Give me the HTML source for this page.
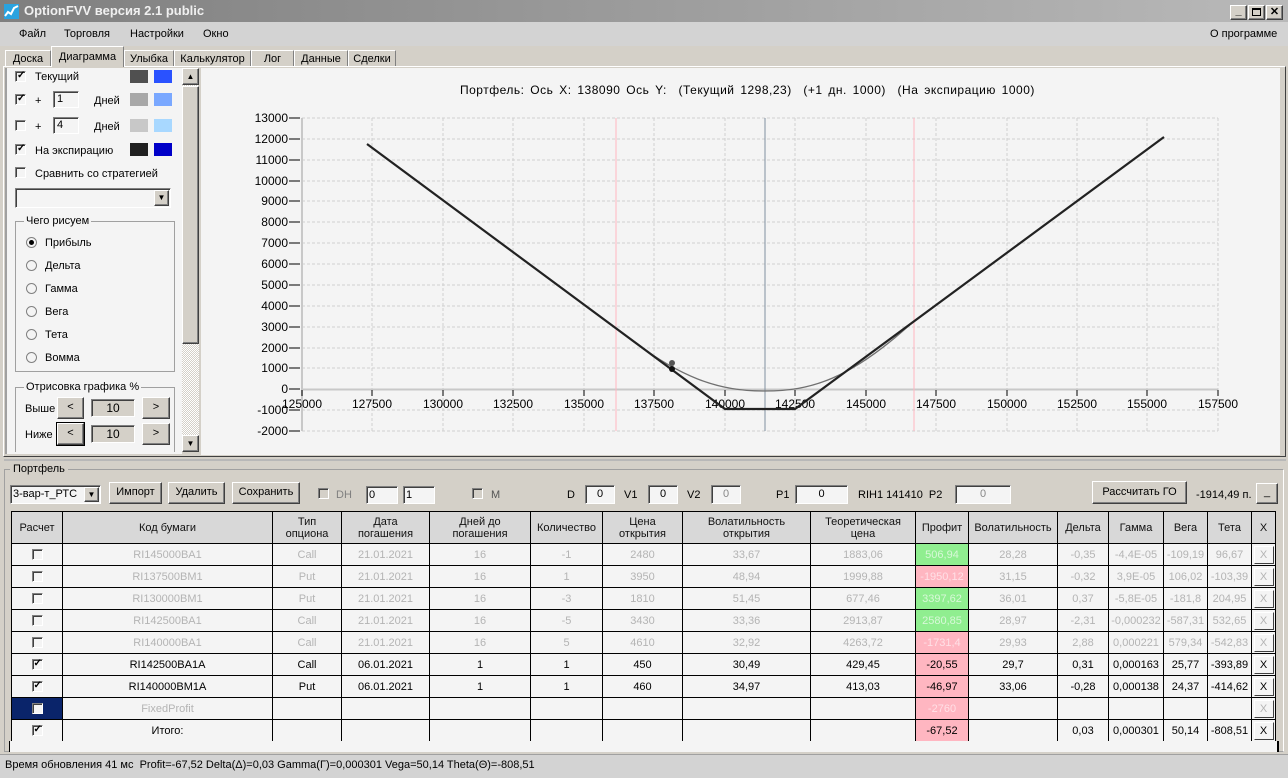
<!DOCTYPE html>
<html><head><meta charset="utf-8"><style>
*{box-sizing:border-box;margin:0;padding:0}
body{width:1288px;height:778px;background:#d4d0c8;font-family:"Liberation Sans",sans-serif;font-size:11px;color:#000;position:relative;overflow:hidden}
.a{position:absolute}
.title{left:0;top:0;width:1288px;height:22px;background:linear-gradient(90deg,#7f7f7f,#b9b9b9);color:#f0f0f0;font-weight:bold;font-size:13px;line-height:22px;padding-left:24px}
.menu{left:0;top:22px;width:1288px;height:24px;background:#d3d3d3;font-size:11px}
.menu span{position:absolute;top:6px}
.tab{position:absolute;top:50px;height:17px;border:1px solid #fff;border-right-color:#808080;border-bottom:none;background:#d4d0c8;font-size:11px;text-align:center;line-height:16px}
.cb{position:absolute;width:11px;height:11px;border:1px solid #808080;border-right-color:#fff;border-bottom-color:#fff;background:#f4f4f4;box-shadow:inset 1px 1px 0 #404040}
.cb.c::after{content:"✓";position:absolute;left:1px;top:-2px;font-size:10px;font-weight:bold;line-height:12px}
.btn{position:absolute;background:#d4d0c8;border:1px solid;border-color:#fff #404040 #404040 #fff;box-shadow:inset -1px -1px 0 #808080;text-align:center;font-size:11px}
.inp{position:absolute;border:1px solid;border-color:#808080 #fff #fff #808080;box-shadow:inset 1px 1px 0 #404040;background:#f4f4f4;font-size:11px;text-align:center}
.sw{position:absolute;width:18px;height:13px}
.rad{position:absolute;width:11px;height:11px;border-radius:50%;border:1px solid #808080;background:#f4f4f4}
table{border-collapse:collapse;table-layout:fixed;position:absolute;left:11px;top:511px;width:1264px;font-size:11px;background:#f4f4f4}
td{border:1px solid #000;height:22px;text-align:center;white-space:nowrap;overflow:hidden;padding:0;vertical-align:middle}
td .cb{position:relative;display:inline-block;vertical-align:middle}
tr.h td{height:32px;background:#d8d8d8;line-height:12px;color:#111}
tr.g td{color:#b4b4b4}
td.gr{background:#90ee90}td.pk{background:#ffb6c1}
.x{display:inline-block;width:20px;height:18px;border:1px solid;border-color:#fff #404040 #404040 #fff;line-height:16px;background:#f4f4f4;vertical-align:middle}
</style></head><body>
<div class="a title">OptionFVV версия 2.1 public</div>
<svg class="a" style="left:4px;top:4px" width="15" height="15"><rect width="15" height="15" fill="#2aa3e0"/><polyline points="1,12 4,8 7,10 10,4 14,2" fill="none" stroke="#fff" stroke-width="2"/></svg>
<div class="a" style="left:1230px;top:5px;width:54px;height:15px">
<div class="btn" style="left:0;top:0;width:17px;height:15px;line-height:10px;font-weight:bold">_</div>
<div class="btn" style="left:18px;top:0;width:17px;height:15px;"><div style="margin:2px 3px;width:9px;height:8px;border:1px solid #000;border-top-width:2px"></div></div>
<div class="btn" style="left:36px;top:0;width:17px;height:15px;line-height:13px;font-weight:bold">✕</div></div>
<div class="a menu"><span style="left:19px">Файл</span><span style="left:64px">Торговля</span><span style="left:130px">Настройки</span><span style="left:203px">Окно</span><span style="left:1210px">О программе</span></div>
<div class="tab" style="left:5px;width:46px">Доска</div>
<div class="tab" style="left:51px;width:73px;top:46px;height:21px;z-index:2;background:#d4d0c8;line-height:20px">Диаграмма</div>
<div class="tab" style="left:124px;width:50px">Улыбка</div>
<div class="tab" style="left:174px;width:77px">Калькулятор</div>
<div class="tab" style="left:251px;width:43px">Лог</div>
<div class="tab" style="left:294px;width:54px">Данные</div>
<div class="tab" style="left:348px;width:48px">Сделки</div>
<div class="a" style="left:3px;top:66px;width:1283px;height:391px;border:1px solid #fff;border-right-color:#404040;border-bottom-color:#404040;background:#d4d0c8"></div>
<div class="a" style="left:5px;top:68px;width:177px;height:386px;background:#f4f4f4;border-left:2px solid #a0a0a0"></div>
<div class="cb c" style="left:15px;top:71px"></div><div class="a" style="left:35px;top:71px">Текущий</div><div class="sw" style="left:130px;top:70px;background:#505050"></div><div class="sw" style="left:154px;top:70px;background:#2a52ff"></div>
<div class="cb c" style="left:15px;top:94px"></div><div class="a" style="left:35px;top:95px">+</div><div class="inp" style="left:53px;top:91px;width:26px;height:17px;text-align:left;padding-left:3px;line-height:15px">1</div><div class="a" style="left:94px;top:95px">Дней</div><div class="sw" style="left:130px;top:93px;background:#a8a8a8"></div><div class="sw" style="left:154px;top:93px;background:#7aa8ff"></div>
<div class="cb" style="left:15px;top:120px"></div><div class="a" style="left:35px;top:121px">+</div><div class="inp" style="left:53px;top:117px;width:26px;height:17px;text-align:left;padding-left:3px;line-height:15px">4</div><div class="a" style="left:94px;top:121px">Дней</div><div class="sw" style="left:130px;top:119px;background:#c8c8c8"></div><div class="sw" style="left:154px;top:119px;background:#a8d8ff"></div>
<div class="cb c" style="left:15px;top:144px"></div><div class="a" style="left:35px;top:145px">На экспирацию</div><div class="sw" style="left:130px;top:143px;background:#202020"></div><div class="sw" style="left:154px;top:143px;background:#0000c8"></div>
<div class="cb" style="left:15px;top:167px"></div><div class="a" style="left:35px;top:168px">Сравнить со стратегией</div>
<div class="inp" style="left:15px;top:188px;width:156px;height:20px"><div class="btn" style="right:1px;top:1px;width:15px;height:16px;font-size:8px;line-height:14px">▼</div></div>
<div class="a" style="left:15px;top:221px;width:160px;height:151px;border:1px solid #a0a0a0"></div><div class="a" style="left:24px;top:215px;background:#f4f4f4;padding:0 2px">Чего рисуем</div>
<div class="rad" style="left:26px;top:237px"><div style="width:5px;height:5px;background:#000;border-radius:50%;margin:2px"></div></div><div class="a" style="left:45px;top:237px">Прибыль</div>
<div class="rad" style="left:26px;top:260px"></div><div class="a" style="left:45px;top:260px">Дельта</div>
<div class="rad" style="left:26px;top:283px"></div><div class="a" style="left:45px;top:283px">Гамма</div>
<div class="rad" style="left:26px;top:306px"></div><div class="a" style="left:45px;top:306px">Вега</div>
<div class="rad" style="left:26px;top:329px"></div><div class="a" style="left:45px;top:329px">Тета</div>
<div class="rad" style="left:26px;top:352px"></div><div class="a" style="left:45px;top:352px">Вомма</div>
<div class="a" style="left:15px;top:387px;width:160px;height:65px;border:1px solid #a0a0a0;border-bottom:none"></div><div class="a" style="left:24px;top:381px;background:#f4f4f4;padding:0 2px">Отрисовка графика %</div>
<div class="a" style="left:25px;top:403px">Выше</div><div class="btn" style="left:57px;top:397px;width:27px;height:22px;line-height:19px">&lt;</div><div class="inp" style="left:91px;top:399px;width:44px;height:18px;background:#d4d0c8;font-size:12px;line-height:16px">10</div><div class="btn" style="left:142px;top:397px;width:28px;height:22px;line-height:19px">&gt;</div>
<div class="a" style="left:25px;top:429px">Ниже</div><div class="btn" style="left:57px;top:423px;width:27px;height:22px;line-height:19px;outline:1px solid #000">&lt;</div><div class="inp" style="left:91px;top:425px;width:44px;height:18px;background:#d4d0c8;font-size:12px;line-height:16px">10</div><div class="btn" style="left:142px;top:423px;width:28px;height:22px;line-height:19px">&gt;</div>
<div class="a" style="left:182px;top:68px;width:17px;height:384px;background:repeating-conic-gradient(#d4d0c8 0 25%,#fff 0 50%) 0 0/2px 2px"></div>
<div class="btn" style="left:182px;top:68px;width:17px;height:17px;font-size:8px;line-height:15px">▲</div>
<div class="btn" style="left:182px;top:86px;width:17px;height:258px"></div>
<div class="btn" style="left:182px;top:435px;width:17px;height:17px;font-size:8px;line-height:15px">▼</div>
<div class="a" style="left:201px;top:68px;width:1079px;height:387px;background:#f4f4f4"></div>
<div class="a" style="left:460px;top:83px;font-size:12px;letter-spacing:0.5px;word-spacing:2px">Портфель: Ось X: 138090 Ось Y:&nbsp; (Текущий 1298,23)&nbsp; (+1 дн. 1000)&nbsp; (На экспирацию 1000)</div>
<svg class="a" style="left:0;top:0" width="1288" height="460" font-family="Liberation Sans" font-size="12">
<g stroke="#d0d0d0" stroke-dasharray="3,2" stroke-width="1">
<line x1="302" y1="118" x2="1218" y2="118"/><line x1="302" y1="139" x2="1218" y2="139"/><line x1="302" y1="160" x2="1218" y2="160"/><line x1="302" y1="181" x2="1218" y2="181"/><line x1="302" y1="201" x2="1218" y2="201"/><line x1="302" y1="222" x2="1218" y2="222"/><line x1="302" y1="243" x2="1218" y2="243"/><line x1="302" y1="264" x2="1218" y2="264"/><line x1="302" y1="285" x2="1218" y2="285"/><line x1="302" y1="306" x2="1218" y2="306"/><line x1="302" y1="327" x2="1218" y2="327"/><line x1="302" y1="348" x2="1218" y2="348"/><line x1="302" y1="368" x2="1218" y2="368"/><line x1="302" y1="410" x2="1218" y2="410"/><line x1="302" y1="431" x2="1218" y2="431"/>
<line x1="372" y1="118" x2="372" y2="431"/><line x1="443" y1="118" x2="443" y2="431"/><line x1="513" y1="118" x2="513" y2="431"/><line x1="584" y1="118" x2="584" y2="431"/><line x1="654" y1="118" x2="654" y2="431"/><line x1="725" y1="118" x2="725" y2="431"/><line x1="795" y1="118" x2="795" y2="431"/><line x1="866" y1="118" x2="866" y2="431"/><line x1="936" y1="118" x2="936" y2="431"/><line x1="1007" y1="118" x2="1007" y2="431"/><line x1="1077" y1="118" x2="1077" y2="431"/><line x1="1147" y1="118" x2="1147" y2="431"/><line x1="1218" y1="118" x2="1218" y2="431"/>
</g>
<line x1="302" y1="118" x2="302" y2="431" stroke="#c8c8c8" stroke-width="2"/>
<line x1="302" y1="389.5" x2="1218" y2="389.5" stroke="#c8c8c8" stroke-width="2"/>
<g stroke="#000"><line x1="289" y1="118" x2="300" y2="118"/><line x1="289" y1="139" x2="300" y2="139"/><line x1="289" y1="160" x2="300" y2="160"/><line x1="289" y1="181" x2="300" y2="181"/><line x1="289" y1="201" x2="300" y2="201"/><line x1="289" y1="222" x2="300" y2="222"/><line x1="289" y1="243" x2="300" y2="243"/><line x1="289" y1="264" x2="300" y2="264"/><line x1="289" y1="285" x2="300" y2="285"/><line x1="289" y1="306" x2="300" y2="306"/><line x1="289" y1="327" x2="300" y2="327"/><line x1="289" y1="348" x2="300" y2="348"/><line x1="289" y1="368" x2="300" y2="368"/><line x1="289" y1="389" x2="300" y2="389"/><line x1="289" y1="410" x2="300" y2="410"/><line x1="289" y1="431" x2="300" y2="431"/>
<line x1="302" y1="390" x2="302" y2="396"/><line x1="372" y1="390" x2="372" y2="396"/><line x1="443" y1="390" x2="443" y2="396"/><line x1="513" y1="390" x2="513" y2="396"/><line x1="584" y1="390" x2="584" y2="396"/><line x1="654" y1="390" x2="654" y2="396"/><line x1="725" y1="390" x2="725" y2="396"/><line x1="795" y1="390" x2="795" y2="396"/><line x1="866" y1="390" x2="866" y2="396"/><line x1="936" y1="390" x2="936" y2="396"/><line x1="1007" y1="390" x2="1007" y2="396"/><line x1="1077" y1="390" x2="1077" y2="396"/><line x1="1147" y1="390" x2="1147" y2="396"/><line x1="1218" y1="390" x2="1218" y2="396"/></g>
<g text-anchor="end"><text x="288" y="122">13000</text><text x="288" y="143">12000</text><text x="288" y="164">11000</text><text x="288" y="185">10000</text><text x="288" y="205">9000</text><text x="288" y="226">8000</text><text x="288" y="247">7000</text><text x="288" y="268">6000</text><text x="288" y="289">5000</text><text x="288" y="310">4000</text><text x="288" y="331">3000</text><text x="288" y="352">2000</text><text x="288" y="372">1000</text><text x="288" y="393">0</text><text x="288" y="414">-1000</text><text x="288" y="435">-2000</text></g>
<g text-anchor="middle"><text x="302" y="408">125000</text><text x="372" y="408">127500</text><text x="443" y="408">130000</text><text x="513" y="408">132500</text><text x="584" y="408">135000</text><text x="654" y="408">137500</text><text x="725" y="408">140000</text><text x="795" y="408">142500</text><text x="866" y="408">145000</text><text x="936" y="408">147500</text><text x="1007" y="408">150000</text><text x="1077" y="408">152500</text><text x="1147" y="408">155000</text><text x="1218" y="408">157500</text></g>
<line x1="616" y1="118" x2="616" y2="431" stroke="#ffb6c1"/><line x1="914" y1="118" x2="914" y2="431" stroke="#ffb6c1"/>
<line x1="765" y1="118" x2="765" y2="431" stroke="#8090a0"/>
<path d="M616,328 C680,380 720,391 765,391 C810,391 850,380 914,321" fill="none" stroke="#707070" stroke-width="1.3"/>
<polyline points="367,144 725,409 795,409 1164,137" fill="none" stroke="#222" stroke-width="2.2"/>
<circle cx="672" cy="363" r="3" fill="#555"/><circle cx="672" cy="369" r="3" fill="#111"/>
</svg>
<div class="a" style="left:4px;top:469px;width:1280px;height:283px;border:1px solid #a0a0a0;border-right-color:#fff"></div>
<div class="a" style="left:4px;top:459px;width:1282px;height:2px;background:#b8b8b8"></div>
<div class="a" style="left:10px;top:463px;background:#d4d0c8;padding:0 3px">Портфель</div>
<div class="inp" style="left:10px;top:485px;width:91px;height:19px;text-align:left;padding:2px;background:#f4f4f4">3-вар-т_РТС<div class="btn" style="right:1px;top:1px;width:15px;height:15px;font-size:8px;line-height:13px">▼</div></div>
<div class="btn" style="left:109px;top:482px;width:53px;height:22px;line-height:19px">Импорт</div>
<div class="btn" style="left:168px;top:482px;width:57px;height:22px;line-height:19px">Удалить</div>
<div class="btn" style="left:232px;top:482px;width:68px;height:22px;line-height:19px">Сохранить</div>
<div class="cb" style="left:318px;top:488px;background:#d4d0c8"></div><div class="a" style="left:336px;top:489px;color:#808080">DH</div>
<div class="inp" style="left:366px;top:486px;width:32px;height:18px;text-align:left;padding-left:2px;background:#f4f4f4;line-height:16px">0</div>
<div class="inp" style="left:403px;top:486px;width:32px;height:18px;text-align:left;padding-left:2px;background:#f4f4f4;line-height:16px">1</div>
<div class="cb" style="left:472px;top:488px;background:#d4d0c8"></div><div class="a" style="left:491px;top:489px;color:#555">M</div>
<div class="a" style="left:567px;top:489px">D</div><div class="inp" style="left:585px;top:485px;width:30px;height:19px;line-height:17px">0</div>
<div class="a" style="left:624px;top:489px">V1</div><div class="inp" style="left:648px;top:485px;width:30px;height:19px;line-height:17px">0</div>
<div class="a" style="left:687px;top:489px">V2</div><div class="inp" style="left:711px;top:485px;width:30px;height:19px;line-height:17px;color:#888">0</div>
<div class="a" style="left:776px;top:489px">P1</div><div class="inp" style="left:795px;top:485px;width:53px;height:19px;line-height:17px">0</div>
<div class="a" style="left:858px;top:489px">RIH1 141410&nbsp; P2</div><div class="inp" style="left:955px;top:485px;width:56px;height:19px;line-height:17px;color:#888">0</div>
<div class="btn" style="left:1092px;top:481px;width:95px;height:23px;line-height:20px">Рассчитать ГО</div>
<div class="a" style="left:1196px;top:489px">-1914,49 п.</div>
<div class="btn" style="left:1256px;top:483px;width:22px;height:21px;line-height:16px">_</div>
<table>
<colgroup><col style="width:51px"><col style="width:210px"><col style="width:69px"><col style="width:88px"><col style="width:101px"><col style="width:72px"><col style="width:80px"><col style="width:128px"><col style="width:105px"><col style="width:53px"><col style="width:89px"><col style="width:51px"><col style="width:55px"><col style="width:44px"><col style="width:44px"><col style="width:24px"></colgroup>
<tr class="h"><td>Расчет</td><td>Код бумаги</td><td>Тип<br>опциона</td><td>Дата<br>погашения</td><td>Дней до<br>погашения</td><td>Количество</td><td>Цена<br>открытия</td><td>Волатильность<br>открытия</td><td>Теоретическая<br>цена</td><td>Профит</td><td>Волатильность</td><td>Дельта</td><td>Гамма</td><td>Вега</td><td>Тета</td><td>X</td></tr>
<tr class="g"><td><span class="cb"></span></td><td>RI145000BA1</td><td>Call</td><td>21.01.2021</td><td>16</td><td>-1</td><td>2480</td><td>33,67</td><td>1883,06</td><td class="gr" style="color:#d8f8d8">506,94</td><td>28,28</td><td>-0,35</td><td>-4,4E-05</td><td>-109,19</td><td>96,67</td><td><span class="x">X</span></td></tr>
<tr class="g"><td><span class="cb"></span></td><td>RI137500BM1</td><td>Put</td><td>21.01.2021</td><td>16</td><td>1</td><td>3950</td><td>48,94</td><td>1999,88</td><td class="pk" style="color:#ffe0e6">-1950,12</td><td>31,15</td><td>-0,32</td><td>3,9E-05</td><td>106,02</td><td>-103,39</td><td><span class="x">X</span></td></tr>
<tr class="g"><td><span class="cb"></span></td><td>RI130000BM1</td><td>Put</td><td>21.01.2021</td><td>16</td><td>-3</td><td>1810</td><td>51,45</td><td>677,46</td><td class="gr" style="color:#d8f8d8">3397,62</td><td>36,01</td><td>0,37</td><td>-5,8E-05</td><td>-181,8</td><td>204,95</td><td><span class="x">X</span></td></tr>
<tr class="g"><td><span class="cb"></span></td><td>RI142500BA1</td><td>Call</td><td>21.01.2021</td><td>16</td><td>-5</td><td>3430</td><td>33,36</td><td>2913,87</td><td class="gr" style="color:#d8f8d8">2580,85</td><td>28,97</td><td>-2,31</td><td>-0,000232</td><td>-587,31</td><td>532,65</td><td><span class="x">X</span></td></tr>
<tr class="g"><td><span class="cb"></span></td><td>RI140000BA1</td><td>Call</td><td>21.01.2021</td><td>16</td><td>5</td><td>4610</td><td>32,92</td><td>4263,72</td><td class="pk" style="color:#ffe0e6">-1731,4</td><td>29,93</td><td>2,88</td><td>0,000221</td><td>579,34</td><td>-542,83</td><td><span class="x">X</span></td></tr>
<tr><td><span class="cb c"></span></td><td>RI142500BA1A</td><td>Call</td><td>06.01.2021</td><td>1</td><td>1</td><td>450</td><td>30,49</td><td>429,45</td><td class="pk">-20,55</td><td>29,7</td><td>0,31</td><td>0,000163</td><td>25,77</td><td>-393,89</td><td><span class="x">X</span></td></tr>
<tr><td><span class="cb c"></span></td><td>RI140000BM1A</td><td>Put</td><td>06.01.2021</td><td>1</td><td>1</td><td>460</td><td>34,97</td><td>413,03</td><td class="pk">-46,97</td><td>33,06</td><td>-0,28</td><td>0,000138</td><td>24,37</td><td>-414,62</td><td><span class="x">X</span></td></tr>
<tr class="g"><td style="background:#0a246a"><span class="cb"></span></td><td>FixedProfit</td><td></td><td></td><td></td><td></td><td></td><td></td><td></td><td class="pk" style="color:#ffe0e6">-2760</td><td></td><td></td><td></td><td></td><td></td><td><span class="x">X</span></td></tr>
<tr><td><span class="cb c"></span></td><td>Итого:</td><td></td><td></td><td></td><td></td><td></td><td></td><td></td><td class="pk">-67,52</td><td></td><td>0,03</td><td>0,000301</td><td>50,14</td><td>-808,51</td><td><span class="x">X</span></td></tr>
</table>
<div class="a" style="left:9px;top:741px;width:1270px;height:11px;background:#f4f4f4;border-left:1px solid #000;border-right:2px solid #000"></div>
<div class="a" style="left:0;top:754px;width:1288px;height:24px;background:#d3d3d3;border-top:1px solid #a0a0a0"></div>
<div class="a" style="left:5px;top:759px">Время обновления 41 мс&nbsp; Profit=-67,52 Delta(Δ)=0,03 Gamma(Γ)=0,000301 Vega=50,14 Theta(Θ)=-808,51</div>
</body></html>
